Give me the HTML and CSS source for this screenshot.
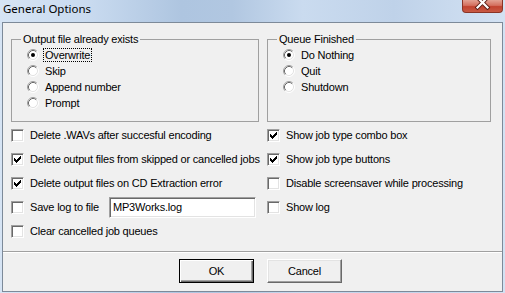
FILE: index.html
```html
<!DOCTYPE html>
<html>
<head>
<meta charset="utf-8">
<title>General Options</title>
<link rel="stylesheet" href="styles.css">
</head>
<body>
<div class="window">
  <div class="titlebar">
    <span class="title">General Options</span>
    <div class="close">
      <svg width="41" height="13" viewBox="0 0 41 13">
        <path d="M15.5 -2.5L25.5 7.5M25.5 -2.5L15.5 7.5" stroke="#5b1d14" stroke-width="4" stroke-linecap="square"/>
        <path d="M15.5 -2.5L25.5 7.5M25.5 -2.5L15.5 7.5" stroke="#fff" stroke-width="2.2" stroke-linecap="square"/>
      </svg>
    </div>
  </div>
  <div class="client">
    <div class="content">
      <div class="groups">
        <fieldset class="group">
          <legend>Output file already exists</legend>
          <div class="radio"><svg class="rb" width="12" height="12" viewBox="0 0 12 12"><circle cx="6" cy="6" r="5" fill="#fff"/><path d="M2.11 9.89A5.5 5.5 0 0 1 9.89 2.11" fill="none" stroke="#a0a0a0"/><path d="M9.89 2.11A5.5 5.5 0 0 1 2.11 9.89" fill="none" stroke="#fff"/><path d="M2.82 9.18A4.5 4.5 0 0 1 9.18 2.82" fill="none" stroke="#696969"/><path d="M9.18 2.82A4.5 4.5 0 0 1 2.82 9.18" fill="none" stroke="#e3e3e3"/><circle cx="6" cy="6" r="2" fill="#000"/></svg><span class="focus">Overwrite</span></div>
          <div class="radio"><svg class="rb" width="12" height="12" viewBox="0 0 12 12"><circle cx="6" cy="6" r="5" fill="#fff"/><path d="M2.11 9.89A5.5 5.5 0 0 1 9.89 2.11" fill="none" stroke="#a0a0a0"/><path d="M9.89 2.11A5.5 5.5 0 0 1 2.11 9.89" fill="none" stroke="#fff"/><path d="M2.82 9.18A4.5 4.5 0 0 1 9.18 2.82" fill="none" stroke="#696969"/><path d="M9.18 2.82A4.5 4.5 0 0 1 2.82 9.18" fill="none" stroke="#e3e3e3"/></svg><span>Skip</span></div>
          <div class="radio"><svg class="rb" width="12" height="12" viewBox="0 0 12 12"><circle cx="6" cy="6" r="5" fill="#fff"/><path d="M2.11 9.89A5.5 5.5 0 0 1 9.89 2.11" fill="none" stroke="#a0a0a0"/><path d="M9.89 2.11A5.5 5.5 0 0 1 2.11 9.89" fill="none" stroke="#fff"/><path d="M2.82 9.18A4.5 4.5 0 0 1 9.18 2.82" fill="none" stroke="#696969"/><path d="M9.18 2.82A4.5 4.5 0 0 1 2.82 9.18" fill="none" stroke="#e3e3e3"/></svg><span>Append number</span></div>
          <div class="radio"><svg class="rb" width="12" height="12" viewBox="0 0 12 12"><circle cx="6" cy="6" r="5" fill="#fff"/><path d="M2.11 9.89A5.5 5.5 0 0 1 9.89 2.11" fill="none" stroke="#a0a0a0"/><path d="M9.89 2.11A5.5 5.5 0 0 1 2.11 9.89" fill="none" stroke="#fff"/><path d="M2.82 9.18A4.5 4.5 0 0 1 9.18 2.82" fill="none" stroke="#696969"/><path d="M9.18 2.82A4.5 4.5 0 0 1 2.82 9.18" fill="none" stroke="#e3e3e3"/></svg><span>Prompt</span></div>
        </fieldset>
        <fieldset class="group">
          <legend>Queue Finished</legend>
          <div class="radio"><svg class="rb" width="12" height="12" viewBox="0 0 12 12"><circle cx="6" cy="6" r="5" fill="#fff"/><path d="M2.11 9.89A5.5 5.5 0 0 1 9.89 2.11" fill="none" stroke="#a0a0a0"/><path d="M9.89 2.11A5.5 5.5 0 0 1 2.11 9.89" fill="none" stroke="#fff"/><path d="M2.82 9.18A4.5 4.5 0 0 1 9.18 2.82" fill="none" stroke="#696969"/><path d="M9.18 2.82A4.5 4.5 0 0 1 2.82 9.18" fill="none" stroke="#e3e3e3"/><circle cx="6" cy="6" r="2" fill="#000"/></svg><span>Do Nothing</span></div>
          <div class="radio"><svg class="rb" width="12" height="12" viewBox="0 0 12 12"><circle cx="6" cy="6" r="5" fill="#fff"/><path d="M2.11 9.89A5.5 5.5 0 0 1 9.89 2.11" fill="none" stroke="#a0a0a0"/><path d="M9.89 2.11A5.5 5.5 0 0 1 2.11 9.89" fill="none" stroke="#fff"/><path d="M2.82 9.18A4.5 4.5 0 0 1 9.18 2.82" fill="none" stroke="#696969"/><path d="M9.18 2.82A4.5 4.5 0 0 1 2.82 9.18" fill="none" stroke="#e3e3e3"/></svg><span>Quit</span></div>
          <div class="radio"><svg class="rb" width="12" height="12" viewBox="0 0 12 12"><circle cx="6" cy="6" r="5" fill="#fff"/><path d="M2.11 9.89A5.5 5.5 0 0 1 9.89 2.11" fill="none" stroke="#a0a0a0"/><path d="M9.89 2.11A5.5 5.5 0 0 1 2.11 9.89" fill="none" stroke="#fff"/><path d="M2.82 9.18A4.5 4.5 0 0 1 9.18 2.82" fill="none" stroke="#696969"/><path d="M9.18 2.82A4.5 4.5 0 0 1 2.82 9.18" fill="none" stroke="#e3e3e3"/></svg><span>Shutdown</span></div>
        </fieldset>
      </div>
      <div class="checks">
        <div class="check"><span class="cb"></span><span>Delete .WAVs after succesful encoding</span></div>
        <div class="check"><span class="cb"><svg width="7" height="7" viewBox="0 0 7 7"><path d="M0 2h1v3H0zM1 3h1v3H1zM2 4h1v3H2zM3 3h1v3H3zM4 2h1v3H4zM5 1h1v3H5zM6 0h1v3H6z"/></svg></span><span>Show job type combo box</span></div>
        <div class="check"><span class="cb"><svg width="7" height="7" viewBox="0 0 7 7"><path d="M0 2h1v3H0zM1 3h1v3H1zM2 4h1v3H2zM3 3h1v3H3zM4 2h1v3H4zM5 1h1v3H5zM6 0h1v3H6z"/></svg></span><span>Delete output files from skipped or cancelled jobs</span></div>
        <div class="check"><span class="cb"><svg width="7" height="7" viewBox="0 0 7 7"><path d="M0 2h1v3H0zM1 3h1v3H1zM2 4h1v3H2zM3 3h1v3H3zM4 2h1v3H4zM5 1h1v3H5zM6 0h1v3H6z"/></svg></span><span>Show job type buttons</span></div>
        <div class="check"><span class="cb"><svg width="7" height="7" viewBox="0 0 7 7"><path d="M0 2h1v3H0zM1 3h1v3H1zM2 4h1v3H2zM3 3h1v3H3zM4 2h1v3H4zM5 1h1v3H5zM6 0h1v3H6z"/></svg></span><span>Delete output files on CD Extraction error</span></div>
        <div class="check"><span class="cb"></span><span>Disable screensaver while processing</span></div>
        <div class="check"><span class="cb"></span><span>Save log to file</span><span class="field">MP3Works.log</span></div>
        <div class="check"><span class="cb"></span><span>Show log</span></div>
        <div class="check"><span class="cb"></span><span>Clear cancelled job queues</span></div>
        <div></div>
      </div>
    </div>
    <div class="footer">
      <button class="btn default">OK</button>
      <button class="btn">Cancel</button>
    </div>
  </div>
</div>
</body>
</html>
```

FILE: styles.css
```css
* { box-sizing: border-box; }
html, body { margin: 0; padding: 0; }
body {
  width: 505px;
  height: 293px;
  overflow: hidden;
  font-family: "Liberation Sans", Arial, sans-serif;
  font-size: 11px;
  letter-spacing: -0.2px;
  color: #000;
}
.window {
  height: 293px;
  display: flex;
  flex-direction: column;
  padding: 0 2px 1px 2px;
  background: linear-gradient(to right, #d6e4f4 0%, #c8daef 18%, #aec5e0 36%, #b1c7e1 46%, #cadbef 60%, #bfd2e9 78%, #d3e2f3 100%);
}
.titlebar {
  height: 22px;
  display: flex;
  align-items: flex-start;
}
.title {
  font-family: "Noto Sans", "Open Sans", sans-serif;
  font-size: 11.5px;
  letter-spacing: 0;
  line-height: 17px;
  padding-left: 1px;
  color: #000;
}
.close {
  margin-left: auto;
  width: 41px;
  height: 13px;
  border: 1px solid #8a3426;
  border-top: none;
  border-radius: 0 0 4px 4px;
  background: linear-gradient(#e3a293 0%, #d4705f 45%, #c2432f 55%, #c85a45 100%);
  overflow: hidden;
  display: flex;
  justify-content: center;
}
.close svg { display: block; flex: none; margin-left: -1px; }
.client {
  flex: 1;
  border: 1px solid #7d8a99;
  background: #f0f0f0;
  display: flex;
  flex-direction: column;
}
.content {
  flex: 1;
  padding: 10px 0 0 8px;
}
.groups, .checks {
  display: grid;
  grid-template-columns: 248px 224px;
  column-gap: 8px;
}
.group {
  margin: 0;
  min-width: 0;
  padding: 1px 0 10px 8px;
  border: 1px solid #a0a0a0;
}
.group legend {
  padding: 0 2px;
  margin-left: 1px;
  line-height: 13px;
}
.radio {
  display: flex;
  align-items: center;
  height: 16px;
  padding-left: 7px;
  gap: 6px;
}
.rb { display: block; flex: none; }
.focus {
  outline: 1px dotted #000;
  outline-offset: 0;
  padding: 0 1px;
  margin-left: -1px;
  line-height: 12px;
}
.checks {
  margin-top: 1px;
  grid-auto-rows: 24px;
}
.check {
  display: flex;
  align-items: center;
  gap: 6px;
  white-space: nowrap;
}
.cb {
  flex: none;
  width: 13px;
  height: 13px;
  background: #fff;
  border: 1px solid;
  border-color: #a0a0a0 #fff #fff #a0a0a0;
  box-shadow: inset 1px 1px #696969, inset -1px -1px #e3e3e3;
  display: flex;
  align-items: center;
  justify-content: center;
}
.cb svg { display: block; }
.field {
  margin-left: 4px;
  width: 147px;
  height: 21px;
  background: #fff;
  border: 1px solid;
  border-color: #a0a0a0 #fff #fff #a0a0a0;
  box-shadow: inset 1px 1px #696969, inset -1px -1px #e3e3e3;
  padding: 0 3px;
  line-height: 19px;
}
.footer {
  height: 40px;
  flex: none;
  border-top: 1px solid #a0a0a0;
  box-shadow: inset 0 1px #fff;
  display: flex;
  justify-content: center;
  align-items: flex-start;
  gap: 13px;
  padding: 7px 0 0 16px;
}
.btn {
  width: 75px;
  height: 24px;
  padding: 0;
  font: inherit;
  letter-spacing: inherit;
  color: #000;
  background: #f0f0f0;
  border: 1px solid;
  border-color: #fff #696969 #696969 #fff;
  box-shadow: inset -1px -1px #a0a0a0, inset 1px 1px #e3e3e3;
}
.btn.default {
  border-color: #000;
  box-shadow: inset 1px 1px #fff, inset -1px -1px #696969, inset -2px -2px #a0a0a0;
}
```
